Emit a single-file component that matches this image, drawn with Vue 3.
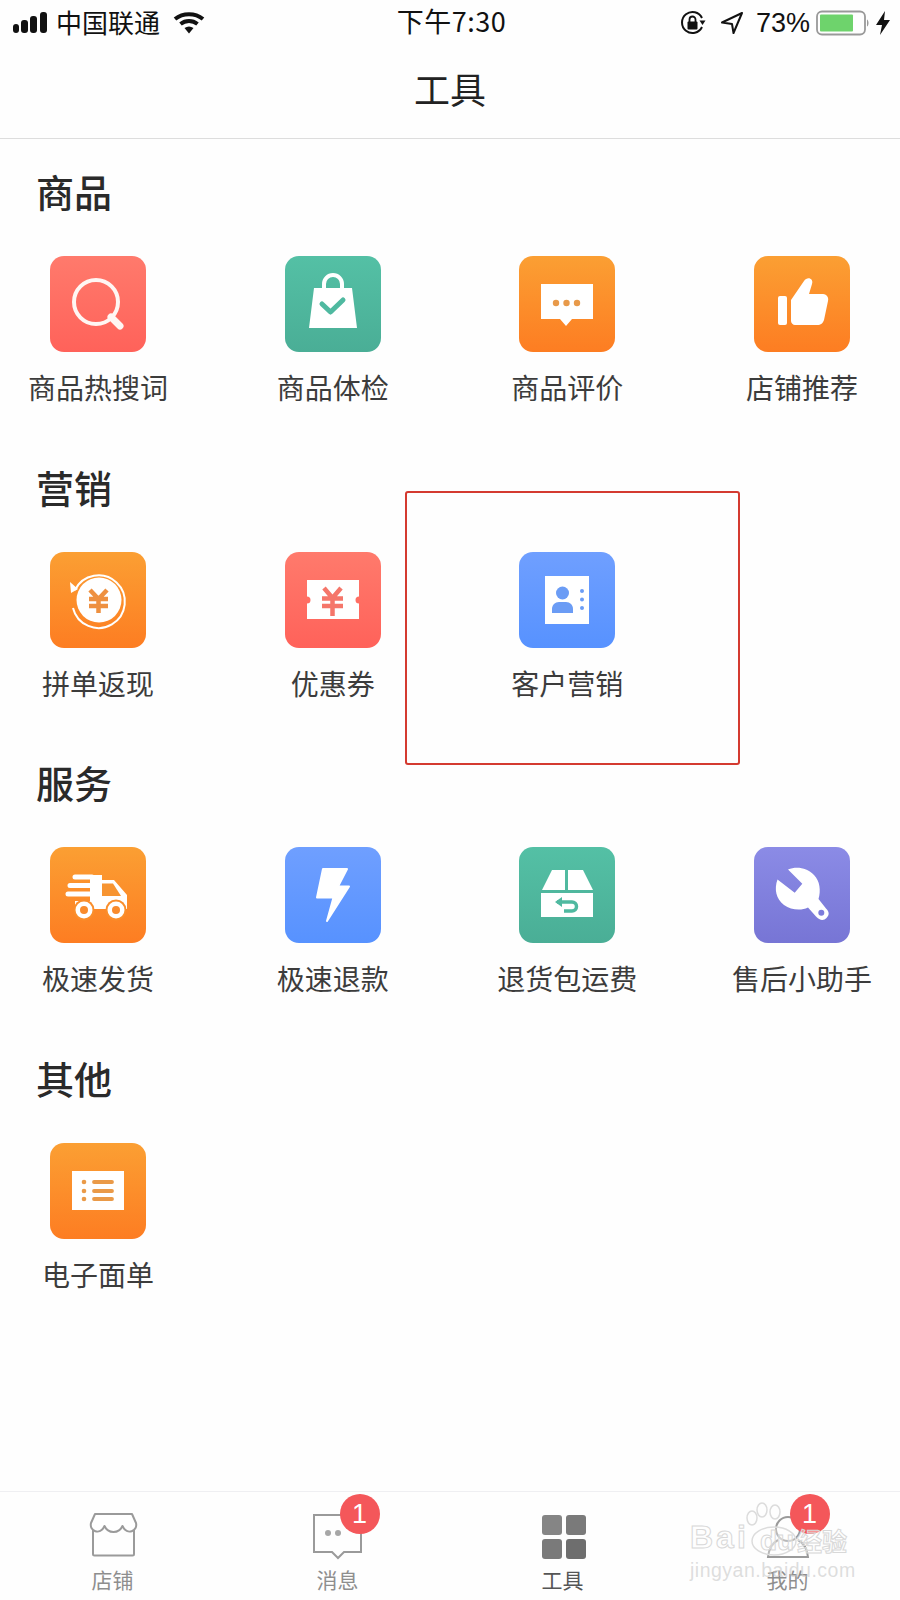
<script setup>
const sections = [
  {
    title: '商品',
    items: [
      { label: '商品热搜词', icon: 'search', tone: 'red' },
      { label: '商品体检', icon: 'bag', tone: 'green' },
      { label: '商品评价', icon: 'chat', tone: 'orange' },
      { label: '店铺推荐', icon: 'thumb', tone: 'orange' }
    ]
  },
  {
    title: '营销',
    items: [
      { label: '拼单返现', icon: 'coin', tone: 'orange' },
      { label: '优惠券', icon: 'coupon', tone: 'red' },
      { label: '客户营销', icon: 'contact', tone: 'blue' }
    ]
  },
  {
    title: '服务',
    items: [
      { label: '极速发货', icon: 'truck', tone: 'orange' },
      { label: '极速退款', icon: 'bolt', tone: 'blue' },
      { label: '退货包运费', icon: 'box', tone: 'green' },
      { label: '售后小助手', icon: 'wrench', tone: 'purple' }
    ]
  },
  {
    title: '其他',
    items: [{ label: '电子面单', icon: 'list', tone: 'orange' }]
  }
]

const tabs = [
  { label: '店铺', icon: 'store' },
  { label: '消息', icon: 'message', badge: 1 },
  { label: '工具', icon: 'grid', active: true },
  { label: '我的', icon: 'person', badge: 1 }
]
</script>

<template>
  <div class="page">
    <div class="status">
      <div class="status-left">
        <svg class="signal" width="36" height="22" viewBox="0 0 36 22">
          <rect x="0" y="12" width="6" height="9" rx="3" />
          <rect x="8" y="8" width="7" height="13" rx="3" />
          <rect x="17" y="4" width="7" height="17" rx="3" />
          <rect x="27" y="0" width="7" height="21" rx="3" />
        </svg>
        <span class="carrier">中国联通</span>
        <svg class="wifi" width="32" height="24" viewBox="0 0 32 24">
          <path d="M2 8C10 1.500 22 1.500 30 8" fill="none" stroke="#111" stroke-width="4" />
          <path d="M7.500 13C12.500 9 19.500 9 24.500 13" fill="none" stroke="#111" stroke-width="4" />
          <path d="M11.500 17C14.500 15 17.500 15 20.500 17L16 22.500Z" fill="#111" />
        </svg>
      </div>
      <span class="time">下午7:30</span>
      <div class="status-right">
        <svg width="26" height="26" viewBox="0 0 26 26">
          <path d="M22 17A10.500 10.500 0 1 1 22 8" fill="none" stroke="#111" stroke-width="2" />
          <path d="M19.500 10.500H25.500L22.500 15Z" fill="#111" />
          <rect x="7.500" y="11.500" width="10" height="8" rx="1" fill="#111" />
          <path d="M9.500 12V9.500a3 3 0 0 1 6 0V12" fill="none" stroke="#111" stroke-width="1.800" />
        </svg>
        <svg class="arrow" width="24" height="24" viewBox="0 0 24 24">
          <path d="M22 2L2 11.500L12 13L13.500 22Z" fill="none" stroke="#111" stroke-width="2" stroke-linejoin="round" />
        </svg>
        <span class="percent">73%</span>
        <svg width="54" height="26" viewBox="0 0 54 26">
          <rect x="1" y="1.500" width="48" height="23" rx="5" fill="none" stroke="#999" stroke-width="1.800" />
          <rect x="4" y="4.500" width="33" height="17" rx="1" fill="#6ed36c" />
          <path d="M51 9.500c2 1 2 6 0 7Z" fill="#999" />
        </svg>
        <svg width="14" height="24" viewBox="0 0 14 24">
          <path d="M9 0L0 14H6L4 24L14 9H8Z" fill="#111" />
        </svg>
      </div>
    </div>

    <header class="nav">工具</header>

    <main class="content">
      <section v-for="section in sections" :key="section.title" class="section">
        <h2 class="section-title">{{ section.title }}</h2>
        <div class="tools">
          <div v-for="item in section.items" :key="item.label" class="tool">
            <div class="tile" :class="item.tone">
              <svg width="96" height="96" viewBox="0 0 96 96">
                <template v-if="item.icon === 'search'">
                  <circle cx="46" cy="46" r="22" fill="none" stroke="#fff6f3" stroke-width="4" />
                  <path d="M61 61L70 70" stroke="#fff6f3" stroke-width="7" stroke-linecap="round" />
                </template>
                <template v-else-if="item.icon === 'bag'">
                  <path d="M39 33V28a9 9 0 0 1 18 0V33" fill="none" stroke="#fff" stroke-width="4" />
                  <path d="M29 32H67L72 72H24Z" fill="#fff" />
                  <path d="M37 48L45.500 56L58 44" fill="none" stroke="#4fb9a0" stroke-width="5" stroke-linecap="round" stroke-linejoin="round" />
                </template>
                <template v-else-if="item.icon === 'chat'">
                  <path d="M22 28H74V63H53L47 70L41 63H22Z" fill="#fff" />
                  <circle cx="37" cy="47" r="3.200" fill="#e89a4a" />
                  <circle cx="47.500" cy="47" r="3.200" fill="#e89a4a" />
                  <circle cx="58" cy="47" r="3.200" fill="#e89a4a" />
                </template>
                <template v-else-if="item.icon === 'thumb'">
                  <rect x="24" y="40" width="9" height="29" rx="2" fill="#fff" />
                  <path d="M37 44L50 25C53 20 60 22 58 28L55 38H69C73 38 75 42 74 45L70 64C69 67 67 69 63 69H41C39 69 37 67 37 65Z" fill="#fff" />
                </template>
                <template v-else-if="item.icon === 'coin'">
                  <circle cx="49" cy="48" r="22.500" fill="#fff" />
                  <path d="M25 38A26.300 26.300 0 1 1 23 56" fill="none" stroke="#fff" stroke-width="2" />
                  <path d="M20 30L28 37L21 41Z" fill="#fff" />
                  <path d="M40 38L48.500 47L57 38M39 47H58M39 54H58M48.500 47V61" fill="none" stroke="#ee9040" stroke-width="4.500" />
                </template>
                <template v-else-if="item.icon === 'coupon'">
                  <path d="M22 28H74V44.500A3.500 3.500 0 0 0 74 51.500V67H22V51.500A3.500 3.500 0 0 0 22 44.500Z" fill="#fff" />
                  <path d="M39 36L47.500 46L56 36M37 46.500H58M37 54H58M47.500 46V64" fill="none" stroke="#f5766a" stroke-width="4.500" />
                </template>
                <template v-else-if="item.icon === 'contact'">
                  <rect x="26" y="24" width="44" height="48" fill="#fff" />
                  <circle cx="43.500" cy="41" r="6.500" fill="#6b9cf5" />
                  <path d="M33 61V57C33 53 36 50 40 50H47C51 50 54 53 54 57V61Z" fill="#6b9cf5" />
                  <circle cx="63" cy="39" r="2" fill="#6b9cf5" />
                  <circle cx="63" cy="47.500" r="2" fill="#6b9cf5" />
                  <circle cx="63" cy="56" r="2" fill="#6b9cf5" />
                </template>
                <template v-else-if="item.icon === 'truck'">
                  <path d="M40 28H52V33H64L77 48V62H25V54H40Z" fill="#fff" />
                  <path d="M25 30H42M20 38.500H42M18 47H40" stroke="#fff" stroke-width="5" stroke-linecap="round" />
                  <path d="M52 36.500H63L71 49H52Z" fill="#f79431" />
                  <circle cx="34" cy="63" r="10.500" fill="#fa8e2b" />
                  <circle cx="34" cy="63" r="8.500" fill="#fff" />
                  <circle cx="34" cy="63" r="4" fill="#f98b2c" />
                  <circle cx="66" cy="63" r="10.500" fill="#fa8e2b" />
                  <circle cx="66" cy="63" r="8.500" fill="#fff" />
                  <circle cx="66" cy="63" r="4" fill="#f98b2c" />
                </template>
                <template v-else-if="item.icon === 'bolt'">
                  <path d="M38 22H62L53 39.500H64L42 74L48.500 50.500H32Z" fill="#fff" stroke="#fff" stroke-width="2" stroke-linejoin="round" />
                </template>
                <template v-else-if="item.icon === 'box'">
                  <path d="M33 23H46V43H23ZM49 23H64L74 43H49Z" fill="#fff" />
                  <rect x="22" y="46" width="52" height="24" fill="#fff" />
                  <path d="M38 55H53A4.500 4.500 0 0 1 53 64H45" fill="none" stroke="#4fb9a0" stroke-width="3.500" />
                  <path d="M36 55L43 50V60Z" fill="#4fb9a0" />
                </template>
                <template v-else-if="item.icon === 'wrench'">
                  <path d="M34 22.500L48.300 36.700L40.700 45.700L23.500 32.500C20 42 22 52 30 58C37 63 47 64 54 60.500L62 69.500C66 74 70 73.500 72.500 71C75.500 68 75.500 65 72 61.500L64.500 52C67 44 66 34 60 28C53 21 43 19 34 22.500Z" fill="#fff" />
                  <circle cx="67.300" cy="65.700" r="3" fill="#7d7cdc" />
                </template>
                <template v-else-if="item.icon === 'list'">
                  <rect x="22" y="28" width="52" height="39" fill="#fff" />
                  <circle cx="34" cy="39" r="2.300" fill="#ea9a48" />
                  <circle cx="34" cy="48" r="2.300" fill="#ea9a48" />
                  <circle cx="34" cy="56" r="2.300" fill="#ea9a48" />
                  <path d="M44 39H62M44 48H62M44 56H62" stroke="#ea9a48" stroke-width="3.800" stroke-linecap="round" />
                </template>
              </svg>
            </div>
            <span class="tool-label">{{ item.label }}</span>
          </div>
        </div>
      </section>
    </main>

    <nav class="tabbar">
      <div v-for="tab in tabs" :key="tab.label" class="tab" :class="{ active: tab.active }">
        <div class="tab-icon">
          <svg width="52" height="48" viewBox="0 0 52 48">
            <template v-if="tab.icon === 'store'">
              <path d="M6 18V42a1.500 1.500 0 0 0 1.500 1.500H45.500a1.500 1.500 0 0 0 1.500-1.500V18" fill="none" stroke="#9a9a9a" stroke-width="2" />
              <path d="M8 2H45L49 11C51 19 40 24 35.500 14C32 22 21 22 17.500 14C13 24 2 19 4 11Z" fill="#fff" stroke="#9a9a9a" stroke-width="2" stroke-linejoin="round" />
            </template>
            <template v-else-if="tab.icon === 'message'">
              <path d="M2 3H49V40H32L26 46L20 40H2Z" fill="none" stroke="#9a9a9a" stroke-width="2" />
              <circle cx="16" cy="21" r="3" fill="#a6a6a6" />
              <circle cx="26" cy="21" r="3" fill="#a6a6a6" />
            </template>
            <template v-else-if="tab.icon === 'grid'">
              <rect x="5" y="3" width="20" height="20" rx="3" fill="#858585" />
              <rect x="29" y="3" width="20" height="20" rx="3" fill="#7a7a7a" />
              <rect x="5" y="27" width="20" height="20" rx="3" fill="#7a7a7a" />
              <rect x="29" y="27" width="20" height="20" rx="3" fill="#6e6e6e" />
            </template>
            <template v-else>
              <circle cx="26" cy="17" r="12" fill="none" stroke="#9a9a9a" stroke-width="2" />
              <path d="M16 28C10 31 7 37 6 45H46C45 37 42 31 36 28" fill="none" stroke="#9a9a9a" stroke-width="2" />
            </template>
          </svg>
          <span v-if="tab.badge" class="badge">{{ tab.badge }}</span>
        </div>
        <span class="tab-label">{{ tab.label }}</span>
      </div>
    </nav>

    <div class="annotation"></div>

    <div class="watermark">
      <svg class="paw" width="70" height="70" viewBox="0 0 70 70">
        <ellipse cx="17" cy="16" rx="5" ry="7" />
        <ellipse cx="27" cy="8" rx="5" ry="7" />
        <ellipse cx="40" cy="10" rx="5" ry="7" />
        <ellipse cx="39" cy="39" rx="22" ry="14" />
      </svg>
      <span class="wm-bai">Bai</span>
      <span class="wm-du">du</span>
      <span class="wm-cn">经验</span>
      <span class="wm-url">jingyan.baidu.com</span>
    </div>
  </div>
</template>

<style>
html,
body {
  margin: 0;
  background: #fefefe;
}
</style>

<style scoped>
.page {
  position: relative;
  width: 900px;
  height: 1600px;
  overflow: hidden;
  display: flex;
  flex-direction: column;
  background: #fefefe;
  color: #222;
  font-family: "Noto Sans CJK SC", "Liberation Sans", sans-serif;
}

.status {
  height: 46px;
  padding: 0 10px 0 13px;
  display: grid;
  grid-template-columns: 1fr auto 1fr;
  align-items: center;
  color: #111;
}

.status-left {
  display: flex;
  align-items: center;
}

.carrier {
  margin-left: 7px;
  font-size: 26px;
  line-height: 28px;
  margin-bottom: 3px;
}

.wifi {
  margin-left: 13px;
}

.signal rect {
  fill: #111;
}

.time {
  font-size: 27px;
  line-height: 28px;
  letter-spacing: 0.500px;
  margin-bottom: 4px;
}

.status-right {
  display: flex;
  align-items: center;
  justify-content: flex-end;
  gap: 6px;
}

.status-right svg:first-child {
  margin-left: 2px;
}

.arrow {
  margin-left: 8px;
}

.percent {
  margin-left: 6px;
  font-family: "Liberation Sans", sans-serif;
  font-size: 27px;
  line-height: 28px;
  margin-bottom: 1px;
}

.nav {
  height: 92px;
  line-height: 84px;
  text-align: center;
  font-size: 36px;
  color: #222;
  border-bottom: 1px solid #ddd;
}

.content {
  flex: 1;
  padding-top: 25px;
}

.section {
  height: 295.5px;
}

.section-title {
  margin: 0 0 38px 36px;
  font-size: 38px;
  line-height: 54px;
  font-weight: 500;
  color: #2a2a2a;
}

.tools {
  padding-left: 28px;
  display: grid;
  grid-template-columns: repeat(4, 140px);
  column-gap: 94.67px;
}

.tool {
  display: flex;
  flex-direction: column;
  align-items: center;
}

.tile {
  width: 96px;
  height: 96px;
  border-radius: 14px;
}

.tile svg {
  display: block;
}

.orange {
  background: linear-gradient(180deg, #fb9f33, #fd7d22);
}

.red {
  background: linear-gradient(180deg, #ff7a6c, #ff625a);
}

.green {
  background: linear-gradient(180deg, #54c0a5, #4aae96);
}

.blue {
  background: linear-gradient(180deg, #6f9fff, #5792ff);
}

.purple {
  background: linear-gradient(180deg, #8b8be6, #7775d5);
}

.tool-label {
  margin-top: 15px;
  font-size: 28px;
  line-height: 40px;
  white-space: nowrap;
  color: #3c3c3c;
}

.tabbar {
  height: 108px;
  border-top: 1px solid #efeff2;
  display: grid;
  grid-template-columns: repeat(4, 225px);
}

.tab {
  display: flex;
  flex-direction: column;
  align-items: center;
  padding-top: 20px;
}

.tab-icon {
  position: relative;
  width: 52px;
  height: 48px;
}

.tab-icon svg {
  display: block;
}

.badge {
  position: absolute;
  top: -18px;
  left: 28px;
  width: 40px;
  height: 40px;
  border-radius: 50%;
  background: #f4575a;
  color: #fff;
  font-size: 27px;
  line-height: 40px;
  text-align: center;
  font-family: "Liberation Sans", sans-serif;
}

.tab-label {
  margin-top: 4px;
  font-size: 21px;
  line-height: 30px;
  color: #8e8e8e;
}

.tab.active .tab-label {
  color: #555;
}

.annotation {
  position: absolute;
  left: 405px;
  top: 491px;
  width: 335px;
  height: 274px;
  box-sizing: border-box;
  border: 2.500px solid #d43a30;
  border-radius: 3px;
}

.watermark {
  position: absolute;
  left: 688px;
  top: 1500px;
  width: 170px;
  height: 84px;
  pointer-events: none;
}

.paw {
  position: absolute;
  left: 47px;
  top: 2px;
}

.paw ellipse {
  fill: rgba(255, 255, 255, 0.3);
  stroke: #dcdcdc;
  stroke-width: 1.500;
}

.wm-bai,
.wm-du,
.wm-cn {
  position: absolute;
  font-family: "Liberation Sans", sans-serif;
  font-weight: 700;
  color: rgba(255, 255, 255, 0.4);
  -webkit-text-stroke: 1px #d8d8d8;
}

.wm-bai {
  left: 2px;
  top: 21px;
  font-size: 32px;
  line-height: 32px;
  letter-spacing: 3px;
}

.wm-du {
  left: 72px;
  top: 24px;
  font-size: 28px;
  line-height: 34px;
}

.wm-cn {
  left: 109px;
  top: 22px;
  font-family: "Noto Sans CJK SC", sans-serif;
  font-size: 25px;
  line-height: 36px;
}

.wm-url {
  position: absolute;
  left: 2px;
  top: 58px;
  font-family: "Liberation Sans", sans-serif;
  font-size: 19.500px;
  line-height: 24px;
  letter-spacing: 0.500px;
  color: rgba(200, 200, 200, 0.6);
}
</style>
